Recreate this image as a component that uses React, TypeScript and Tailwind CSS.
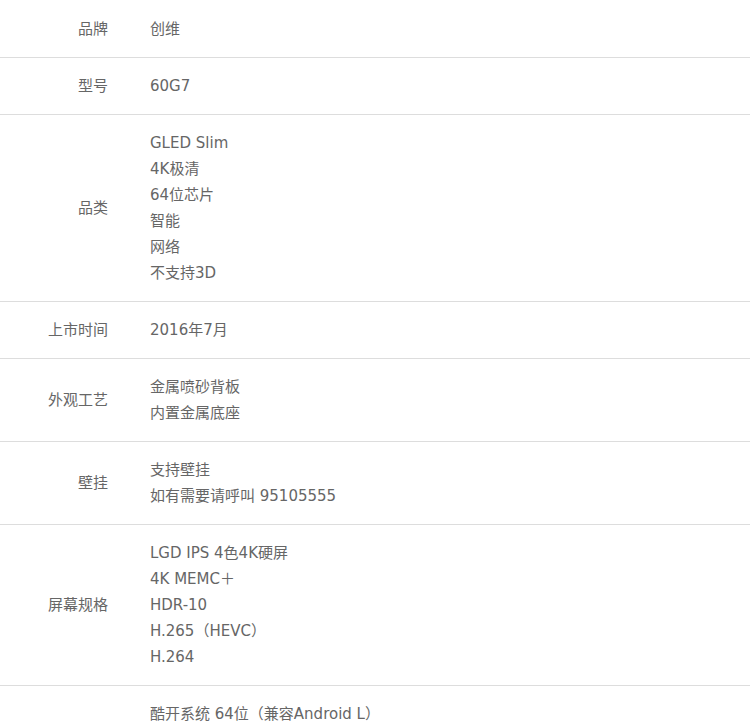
const rows: { label: string; values: string[] }[] = [
  { label: '品牌', values: ['创维'] },
  { label: '型号', values: ['60G7'] },
  { label: '品类', values: ['GLED Slim', '4K极清', '64位芯片', '智能', '网络', '不支持3D'] },
  { label: '上市时间', values: ['2016年7月'] },
  { label: '外观工艺', values: ['金属喷砂背板', '内置金属底座'] },
  { label: '壁挂', values: ['支持壁挂', '如有需要请呼叫 95105555'] },
  { label: '屏幕规格', values: ['LGD IPS 4色4K硬屏', '4K MEMC＋', 'HDR-10', 'H.265（HEVC）', 'H.264'] },
  { label: '操作系统', values: ['酷开系统 64位（兼容Android L）', '酷开系统 6.0', '支持OTA在线升级', '支持第三方应用安装'] },
]

export default function App() {
  return (
    <div className="w-[750px] bg-white pt-px font-['DejaVu_Sans','Noto_Sans_CJK_SC',sans-serif] text-[15px] leading-[26px] text-[#666]">
      {rows.map((row) => (
        <div key={row.label} className="flex items-center border-b border-[#ddd] py-[15px]">
          <div className="w-[108px] shrink-0 text-right">{row.label}</div>
          <div className="pl-[42px]">
            {row.values.map((v) => (
              <div key={v}>{v}</div>
            ))}
          </div>
        </div>
      ))}
    </div>
  )
}
